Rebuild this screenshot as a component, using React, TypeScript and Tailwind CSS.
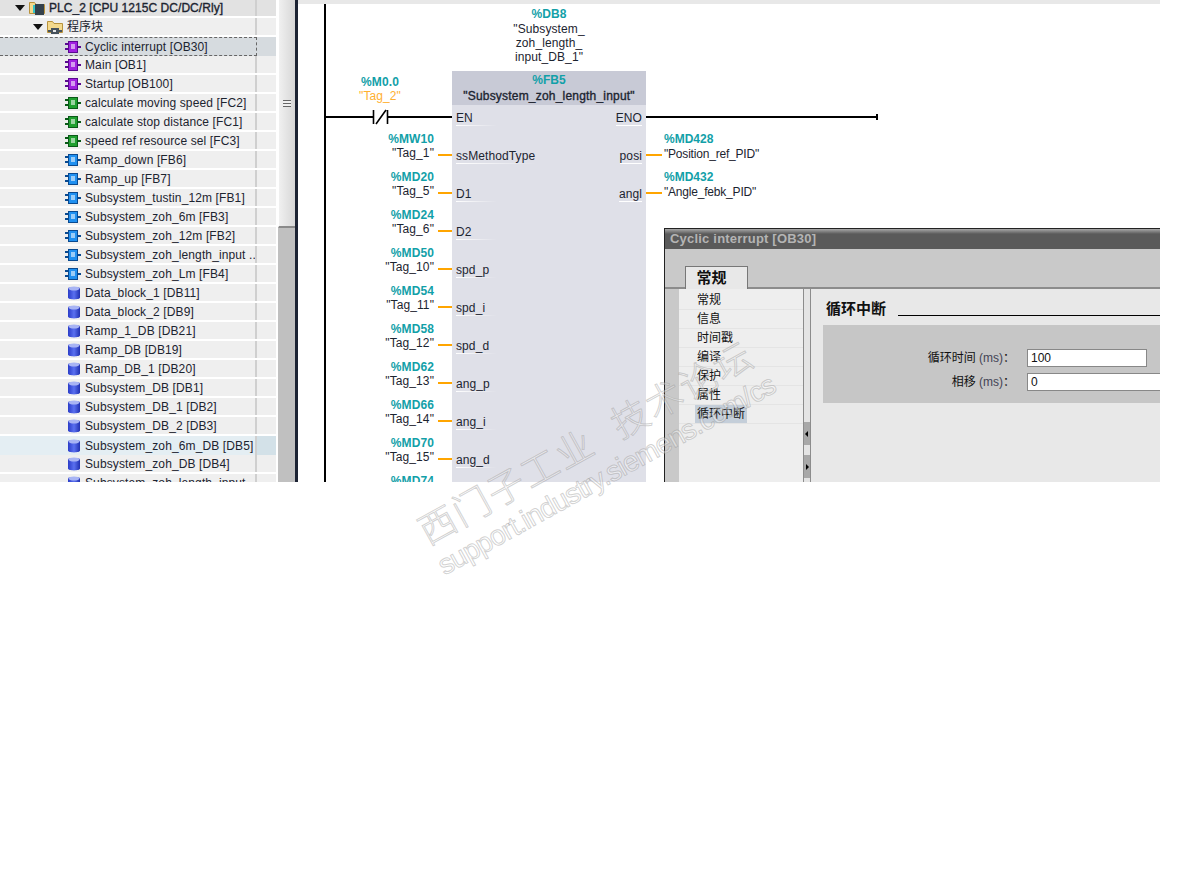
const font = "font-['Liberation_Sans','Noto_Sans_CJK_SC',sans-serif]";

type TreeItem = { label: string; kind: "ob" | "fc" | "fb" | "db"; state?: "selected" | "hover" };

const items: TreeItem[] = [
  { label: "Cyclic interrupt [OB30]", kind: "ob", state: "selected" },
  { label: "Main [OB1]", kind: "ob" },
  { label: "Startup [OB100]", kind: "ob" },
  { label: "calculate moving speed [FC2]", kind: "fc" },
  { label: "calculate stop distance [FC1]", kind: "fc" },
  { label: "speed ref resource sel [FC3]", kind: "fc" },
  { label: "Ramp_down [FB6]", kind: "fb" },
  { label: "Ramp_up [FB7]", kind: "fb" },
  { label: "Subsystem_tustin_12m [FB1]", kind: "fb" },
  { label: "Subsystem_zoh_6m [FB3]", kind: "fb" },
  { label: "Subsystem_zoh_12m [FB2]", kind: "fb" },
  { label: "Subsystem_zoh_length_input ...", kind: "fb" },
  { label: "Subsystem_zoh_Lm [FB4]", kind: "fb" },
  { label: "Data_block_1 [DB11]", kind: "db" },
  { label: "Data_block_2 [DB9]", kind: "db" },
  { label: "Ramp_1_DB [DB21]", kind: "db" },
  { label: "Ramp_DB [DB19]", kind: "db" },
  { label: "Ramp_DB_1 [DB20]", kind: "db" },
  { label: "Subsystem_DB [DB1]", kind: "db" },
  { label: "Subsystem_DB_1 [DB2]", kind: "db" },
  { label: "Subsystem_DB_2 [DB3]", kind: "db" },
  { label: "Subsystem_zoh_6m_DB [DB5]", kind: "db", state: "hover" },
  { label: "Subsystem_zoh_DB [DB4]", kind: "db" },
  { label: "Subsystem_zoh_length_input ...", kind: "db" },
];

const blockColors = {
  ob: { fill: "#a020e0", dark: "#5a0a90" },
  fc: { fill: "#20a030", dark: "#0a5a18" },
  fb: { fill: "#2090f0", dark: "#0a4a90" },
};

function BlockIcon({ kind }: { kind: "ob" | "fc" | "fb" }) {
  const c = blockColors[kind];
  return (
    <svg width="16" height="12" viewBox="0 0 16 12" className="shrink-0">
      <path d="M0 3h4M0 8h4M12 6h4" stroke={c.dark} strokeWidth="2" />
      <rect x="3.5" y="0.5" width="9" height="11" fill={c.fill} stroke={c.dark} />
      <rect x="6" y="3" width="4" height="5" fill="#fff" opacity="0.55" />
    </svg>
  );
}

function DbIcon() {
  return (
    <svg width="12" height="14" viewBox="0 0 12 14" className="shrink-0">
      <defs>
        <linearGradient id="dbg" x1="0" x2="1" y1="0" y2="0">
          <stop offset="0" stopColor="#2a3cc8" />
          <stop offset="0.5" stopColor="#5a70f0" />
          <stop offset="1" stopColor="#2030b0" />
        </linearGradient>
      </defs>
      <path d="M0 2.5C0 .5 12 .5 12 2.5V11.5C12 14 0 14 0 11.5Z" fill="url(#dbg)" />
      <ellipse cx="6" cy="2.5" rx="5.5" ry="2" fill="#a8b4f4" />
    </svg>
  );
}

function Arrow() {
  return (
    <svg width="10" height="6" viewBox="0 0 10 6" className="shrink-0">
      <path d="M0 0h10L5 6Z" fill="#111" />
    </svg>
  );
}

function FolderIcon({ plc }: { plc?: boolean }) {
  return (
    <svg width="16" height="15" viewBox="0 0 16 15" className="shrink-0">
      <path d="M.5 2.5h5l1.5 2h8.5v9H.5Z" fill="#f4d98c" stroke="#b8923c" />
      {plc ? (
        <>
          <rect x="6" y="4" width="9" height="11" fill="#34414c" />
          <rect x="4" y="5" width="2" height="8" fill="#35c4c8" />
        </>
      ) : (
        <>
          <rect x="4" y="9" width="8" height="6" fill="#47525c" />
          <path d="M1 12h3M12 12h3" stroke="#47525c" strokeWidth="2" />
          <rect x="6" y="11" width="3" height="2" fill="#e6e6e6" />
        </>
      )}
    </svg>
  );
}

function Sidebar() {
  return (
    <aside className="relative flex w-[298px] shrink-0">
      <div className="w-[276px] shrink-0 -mt-[1px] text-[12px] leading-none text-[#1c2430] tracking-[0.12px]">
        <div className="flex h-[19px] border-b-2 border-white bg-[#e2e2e2]">
          <div className="flex w-[257px] items-center border-r-2 border-[#cfcfcf] pl-[15px]">
            <Arrow />
            <span className="ml-[4px]"><FolderIcon plc /></span>
            <span className="ml-[4px] tracking-[0.05px] [-webkit-text-stroke:0.35px_#1c2430]">PLC_2 [CPU 1215C DC/DC/Rly]</span>
          </div>
        </div>
        <div className="flex h-[19px] border-b-2 border-white bg-[#efefef]">
          <div className="flex w-[257px] items-center border-r-2 border-[#cfcfcf] pl-[33px]">
            <Arrow />
            <span className="ml-[4px]"><FolderIcon /></span>
            <span className="ml-[4px] text-[12px] tracking-normal">程序块</span>
          </div>
        </div>
        {items.map((item, i) => (
          <div
            key={i}
            className={`flex h-[19px] ${
              item.state === "selected"
                ? "bg-[#d6dbdf]"
                : item.state === "hover"
                  ? "bg-[#d3e1e8]"
                  : "border-b-2 border-white bg-[#efefef]"
            }`}
          >
            <div
              className={`flex w-[257px] items-center overflow-hidden ${
                item.state === "selected"
                  ? "border-y border-r border-dashed border-[#666] pl-[65px]"
                  : item.state === "hover"
                    ? "border-r-2 border-[#cfcfcf] bg-[#e4eef3] pl-[65px]"
                    : "border-r-2 border-[#cfcfcf] pl-[65px]"
              }`}
            >
              <span className="flex w-[20px] shrink-0">
                {item.kind === "db" ? (
                  <span className="ml-[3px]"><DbIcon /></span>
                ) : (
                  <BlockIcon kind={item.kind} />
                )}
              </span>
              <span className="whitespace-nowrap">{item.label}</span>
            </div>
          </div>
        ))}
      </div>
      <div className="flex w-[22px] shrink-0 flex-col border-l-2 border-white">
        <div className="flex h-[228px] items-center justify-center border-b-2 border-x border-white border-b-[#8a8a8a] bg-gradient-to-r from-[#f0f0f0] to-[#d4d4d4] pr-[3px]">
          <div className="-mt-[20px] h-[7px] w-[8px] border-y border-[#666] bg-[linear-gradient(#f0f0f0_33%,#666_33%,#666_66%,#f0f0f0_66%)]" />
        </div>
        <div className="flex-1 bg-[#c0c0c0]" />
      </div>
      <div className="absolute left-[295px] top-0 h-[482px] w-[3px] bg-[#1c2333]" />
    </aside>
  );
}

const inputs = [
  { addr: "%MW10", tag: '"Tag_1"', pin: "ssMethodType" },
  { addr: "%MD20", tag: '"Tag_5"', pin: "D1" },
  { addr: "%MD24", tag: '"Tag_6"', pin: "D2" },
  { addr: "%MD50", tag: '"Tag_10"', pin: "spd_p" },
  { addr: "%MD54", tag: '"Tag_11"', pin: "spd_i" },
  { addr: "%MD58", tag: '"Tag_12"', pin: "spd_d" },
  { addr: "%MD62", tag: '"Tag_13"', pin: "ang_p" },
  { addr: "%MD66", tag: '"Tag_14"', pin: "ang_i" },
  { addr: "%MD70", tag: '"Tag_15"', pin: "ang_d" },
  { addr: "%MD74", tag: '"Tag_16"', pin: "a_ang_tol" },
];

const outputs = [
  { addr: "%MD428", tag: '"Position_ref_PID"' },
  { addr: "%MD432", tag: '"Angle_febk_PID"' },
];

function PinRow({ left, right }: { left: string; right?: string }) {
  return (
    <div className="flex h-[38px] justify-between px-[4px] pt-[4px] text-[12px] tracking-[0.1px] text-[#1c2430]">
      <span className="h-[17px] min-w-[40px] whitespace-nowrap border-b border-transparent [border-image:linear-gradient(to_right,#fff,transparent)_1]">{left}</span>
      {right && <span className="h-[17px] border-b border-white">{right}</span>}
    </div>
  );
}

function Network() {
  return (
    <div className="flex items-start pl-[26px]">
      <div className="h-[478px] w-[2px] shrink-0 bg-black" />

      {/* left operands */}
      <div className="w-[126px] shrink-0 pt-[71px] text-[12px] leading-[14px] tracking-[0.1px] text-[#1c2430]">
        <div className="w-[108px] text-center">
          <div className="font-bold text-[#12a0a8]">%M0.0</div>
          <div className="leading-[15px] text-[#ffb030]">"Tag_2"</div>
        </div>
        <svg width="126" height="27" viewBox="0 0 126 27" className="block">
          <path d="M0 13h47M62 13h64" stroke="#000" strokeWidth="2" />
          <path d="M47.5 6v14M61.5 6v14M50 20l10-14" stroke="#000" strokeWidth="1.6" fill="none" />
        </svg>
        {inputs.map((p) => (
          <div key={p.addr} className="flex h-[38px] justify-end">
            <div className="pt-[1px] text-right">
              <div className="font-bold text-[#12a0a8]">{p.addr}</div>
              <div>{p.tag}</div>
            </div>
            <div className="ml-[4px] mt-[23px] h-[2px] w-[14px] bg-[#ffa500]" />
          </div>
        ))}
      </div>

      {/* function block */}
      <div className="w-[194px] shrink-0 pt-[3px]">
        <div className="mb-[7px] text-center text-[12px] leading-[14px] tracking-[0.1px] text-[#1c2430]">
          <div className="mb-[1px] font-bold text-[#12a0a8]">%DB8</div>
          <div>"Subsystem_</div>
          <div>zoh_length_</div>
          <div>input_DB_1"</div>
        </div>
        <div className="bg-[#dfe0e8]">
          <div className="h-[34px] bg-[#c8cad6] pt-[1px] text-center text-[12px] leading-[16px]">
            <div className="font-bold text-[#12a0a8]">%FB5</div>
            <div className="tracking-[0.2px] text-[#1c2430] [-webkit-text-stroke:0.35px_#1c2430]">"Subsystem_zoh_length_input"</div>
          </div>
          <PinRow left="EN" right="ENO" />
          {inputs.map((p, i) => (
            <PinRow key={p.pin} left={p.pin} right={i === 0 ? "posi" : i === 1 ? "angl" : undefined} />
          ))}
        </div>
      </div>

      {/* right operands */}
      <div className="shrink-0 pt-[112px] text-[12px] leading-[14px] text-[#1c2430]">
        <div className="relative mb-[13px] h-[2px] w-[232px] bg-black">
          <div className="absolute -top-[2px] right-0 h-[6px] w-[2px] bg-black" />
        </div>
        {outputs.map((p) => (
          <div key={p.addr} className="flex h-[38px]">
            <div className="mr-[2px] mt-[23px] h-[2px] w-[16px] bg-[#ffa500]" />
            <div className="pt-[1px]">
              <div className="font-bold text-[#12a0a8]">{p.addr}</div>
              <div className="mt-[1px] tracking-[-0.2px]">{p.tag}</div>
            </div>
          </div>
        ))}
      </div>
    </div>
  );
}

const navItems = ["常规", "信息", "时间戳", "编译", "保护", "属性", "循环中断"];

function PropertiesWindow() {
  return (
    <div className="absolute bottom-0 left-[366px] right-0 top-[228px] flex flex-col overflow-hidden border-l border-t border-[#222] bg-[#c9c9c9] text-[#111]">
      <div className="h-[20px] shrink-0 bg-[linear-gradient(#a8a8a8_0,#5a5a5a_5px)] pl-[5px] text-[13px] font-bold leading-[20px] tracking-[0.2px] text-[#b4b4b4]">
        Cyclic interrupt [OB30]
      </div>
      <div className="flex h-[40px] shrink-0 items-end border-b-2 border-[#8c8c8c] pl-[20px]">
        <div className="-mb-[2px] flex h-[23px] w-[63px] items-center justify-center border-x border-t border-[#777] bg-[#e8e8e8] pr-[10px] text-[15px] font-bold">
          常规
        </div>
      </div>
      <div className="flex flex-1 pl-[14px]">
        <div className="w-[124px] shrink-0 bg-[#eeeeee] pt-[2px] text-[12px]">
          {navItems.map((n, i) => (
            <div key={n} className="flex h-[19px] items-center border-b border-[#e4e4e4] pl-[18px]">
              <span className={i === 6 ? "-ml-[2px] bg-[#c4ced9] px-[2px]" : ""}>{n}</span>
            </div>
          ))}
        </div>
        <div className="flex w-[8px] shrink-0 flex-col border-x border-[#8c8c8c] bg-[#e4e4e4]">
          <div className="mt-[133px] flex h-[23px] items-center bg-[#a8a8a8]"><span className="ml-[1px] h-0 w-0 border-y-[3px] border-r-[3px] border-y-transparent border-r-black" /></div>
          <div className="mt-[10px] flex h-[23px] items-center bg-[#a8a8a8]"><span className="ml-[2px] h-0 w-0 border-y-[3px] border-l-[3px] border-y-transparent border-l-black" /></div>
        </div>
        <div className="flex-1 bg-[#e8e8e8] pl-[12px] pt-[10px]">
          <div className="flex items-center pl-[3px]">
            <span className="text-[15px] font-bold leading-[20px]">循环中断</span>
            <div className="ml-[12px] mt-[12px] h-px flex-1 bg-black" />
          </div>
          <div className="mt-[6px] h-[78px] w-[400px] bg-[#c6c6c6] pt-[24px] text-[12px]">
            <div className="flex h-[18px] items-center">
              <span className="w-[192px] whitespace-nowrap text-right">循环时间 <span className="text-[#445]">(ms)</span>：</span>
              <div className="ml-[12px] flex h-[18px] w-[120px] items-center border border-[#888] bg-white pl-[3px]">100</div>
            </div>
            <div className="mt-[6px] flex h-[18px] items-center">
              <span className="w-[192px] whitespace-nowrap text-right">相移 <span className="text-[#445]">(ms)</span>：</span>
              <div className="ml-[12px] flex h-[18px] w-[180px] items-center border border-[#888] bg-white pl-[3px]">0</div>
            </div>
          </div>
        </div>
      </div>
    </div>
  );
}

function Watermark() {
  return (
    <div className="pointer-events-none absolute left-[412px] top-[517px] origin-top-left -rotate-[29deg] whitespace-nowrap text-white/40 [-webkit-text-stroke:1px_rgba(140,140,140,0.4)]">
      <div className="text-[37px] font-light leading-[42px] tracking-[2px]">
        西门子工业<span className="ml-[25px]">技术论坛</span>
      </div>
      <div className="text-[28px] leading-[32px] tracking-[-0.8px]">support.industry.siemens.com/cs</div>
    </div>
  );
}

export default function App() {
  return (
    <div className={`relative h-[893px] w-full bg-white ${font}`}>
      <div className="flex h-[482px] w-[1160px] overflow-hidden">
        <Sidebar />
        <main className="relative min-w-0 flex-1 bg-white">
          <div className="h-[4px] bg-[#e8e8e8]" />
          <Network />
          <PropertiesWindow />
        </main>
      </div>
      <Watermark />
    </div>
  );
}
